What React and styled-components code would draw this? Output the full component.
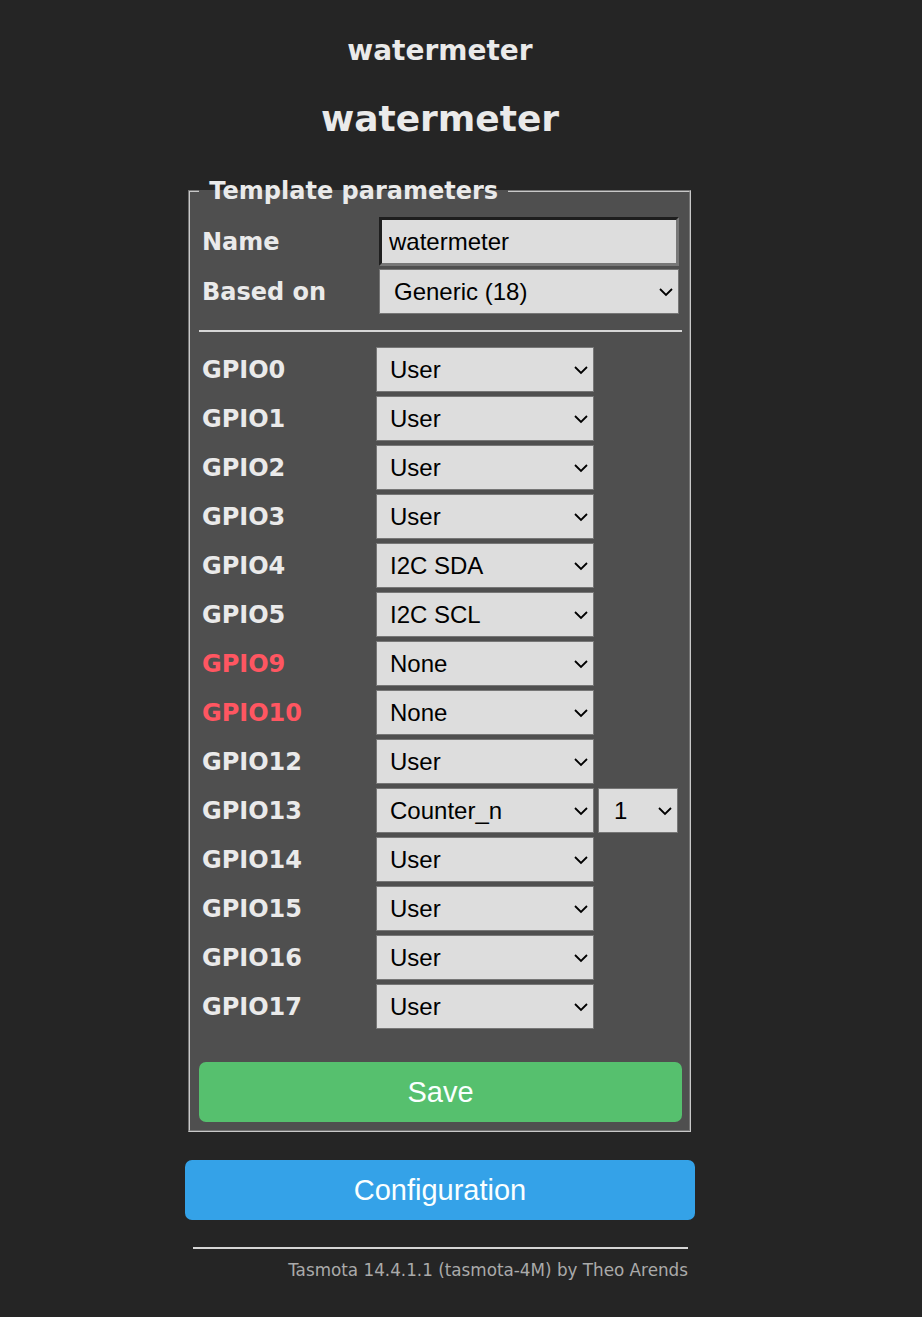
import React from "react";
import styled, { createGlobalStyle } from "styled-components";

const GlobalStyle = createGlobalStyle`
  html, body {
    margin: 0;
    background: #252525;
  }
  body {
    font-family: "DejaVu Sans", Verdana, sans-serif;
    color: #eaeaea;
  }
`;

const Page = styled.div`
  width: 880px;
  text-align: center;
  padding-bottom: 30px;
`;

const DeviceName = styled.h3`
  margin: 34px 0 0;
  font-size: 28px;
  line-height: 33px;
  font-weight: bold;
`;

const ModuleName = styled.h2`
  margin: 31px 0 0;
  font-size: 36px;
  line-height: 42px;
  font-weight: bold;
`;

const Container = styled.div`
  width: 510px;
  margin: 37px auto 0;
  text-align: left;
`;

const Fieldset = styled.fieldset`
  margin: 0 4px 0 3px;
  padding: 9px 7px 8px 9px;
  border: 2px groove #c8c8c8;
  background: #4f4f4f;
  min-width: 0;
`;

const Legend = styled.legend`
  padding: 0 2px;
  font-size: 24px;
  line-height: 28px;
  font-weight: bold;
  white-space: pre;
`;

const ParamGrid = styled.div`
  display: grid;
  grid-template-columns: 180px 300px;
  row-gap: 3px;
  padding-top: 3px;
  align-items: center;
`;

const Label = styled.div`
  padding-left: 3px;
  font-size: 24px;
  font-weight: bold;
  color: ${p => (p.$warn ? "#ff5661" : "#eaeaea")};
`;

const TextInput = styled.input`
  box-sizing: border-box;
  width: 300px;
  height: 49px;
  margin: 0;
  padding: 0 0 0 7px;
  border-style: solid;
  border-width: 3px;
  border-color: #1e1e1e #777 #777 #1e1e1e;
  background: #dddddd;
  color: #000;
  font: 24px "Liberation Sans", Arial, sans-serif;
  outline: none;
`;

const SelectWrap = styled.div`
  position: relative;
  width: ${p => p.$w}px;
  height: 45px;
`;

const Select = styled.select`
  appearance: none;
  -webkit-appearance: none;
  box-sizing: border-box;
  width: 100%;
  height: 100%;
  margin: 0;
  padding: 0 0 0 ${p => p.$pad || 13}px;
  border: 1px solid #767676;
  border-radius: 0;
  background: #dddddd;
  color: #000;
  font: 24px "Liberation Sans", Arial, sans-serif;
  outline: none;
`;

const Chevron = styled.svg`
  position: absolute;
  right: 5px;
  top: 18px;
  pointer-events: none;
`;

const Divider = styled.hr`
  margin: 16px 0 15px;
  border: 0;
  border-top: 2px solid #d6d6d6;
  height: 0;
`;

const GpioGrid = styled.div`
  display: grid;
  grid-template-columns: 177px auto;
  row-gap: 4px;
  align-items: center;
`;

const Controls = styled.div`
  display: flex;
  gap: 4px;
`;

const Button = styled.button`
  display: block;
  width: 100%;
  height: 60px;
  border: 0;
  border-radius: 7px;
  background: ${p => p.$bg};
  color: #faffff;
  font: 29px "Liberation Sans", Arial, sans-serif;
  cursor: pointer;
`;

const SaveButton = styled(Button)`
  margin-top: 33px;
`;

const ConfigForm = styled.div`
  margin-top: 28px;
`;

const Footer = styled.div`
  margin: 27px 7px 0 8px;
  text-align: right;
`;

const FooterRule = styled.hr`
  margin: 0 0 11px;
  border: 0;
  border-top: 2px solid #d6d6d6;
  height: 0;
`;

const FooterLink = styled.a`
  color: #aaa;
  font-size: 16.8px;
  text-decoration: none;
`;

const Dropdown = ({ value, width, pad }) => (
  <SelectWrap $w={width}>
    <Select defaultValue={value} $pad={pad}>
      <option>{value}</option>
    </Select>
    <Chevron width="16" height="10" viewBox="0 0 16 10">
      <path d="M2 2 L8 8 L14 2" fill="none" stroke="#000" strokeWidth="1.8" />
    </Chevron>
  </SelectWrap>
);

const gpios = [
  { pin: "GPIO0", fn: "User" },
  { pin: "GPIO1", fn: "User" },
  { pin: "GPIO2", fn: "User" },
  { pin: "GPIO3", fn: "User" },
  { pin: "GPIO4", fn: "I2C SDA" },
  { pin: "GPIO5", fn: "I2C SCL" },
  { pin: "GPIO9", fn: "None", warn: true },
  { pin: "GPIO10", fn: "None", warn: true },
  { pin: "GPIO12", fn: "User" },
  { pin: "GPIO13", fn: "Counter_n", index: "1" },
  { pin: "GPIO14", fn: "User" },
  { pin: "GPIO15", fn: "User" },
  { pin: "GPIO16", fn: "User" },
  { pin: "GPIO17", fn: "User" }
];

const App = () => (
  <Page>
    <GlobalStyle />
    <DeviceName>watermeter</DeviceName>
    <ModuleName>watermeter</ModuleName>
    <Container>
      <Fieldset>
        <Legend>{"\u00a0Template parameters\u00a0"}</Legend>
        <ParamGrid>
          <Label>Name</Label>
          <TextInput defaultValue="watermeter" />
          <Label>Based on</Label>
          <Dropdown value="Generic (18)" width={300} pad={14} />
        </ParamGrid>
        <Divider />
        <GpioGrid>
          {gpios.map(g => (
            <React.Fragment key={g.pin}>
              <Label $warn={g.warn}>{g.pin}</Label>
              <Controls>
                <Dropdown value={g.fn} width={218} />
                {g.index && <Dropdown value={g.index} width={80} pad={15} />}
              </Controls>
            </React.Fragment>
          ))}
        </GpioGrid>
        <SaveButton $bg="#56c06e">Save</SaveButton>
      </Fieldset>
      <ConfigForm>
        <Button $bg="#34a2e8">Configuration</Button>
      </ConfigForm>
      <Footer>
        <FooterRule />
        <FooterLink href="#">Tasmota 14.4.1.1 (tasmota-4M) by Theo Arends</FooterLink>
      </Footer>
    </Container>
  </Page>
);

export default App;
